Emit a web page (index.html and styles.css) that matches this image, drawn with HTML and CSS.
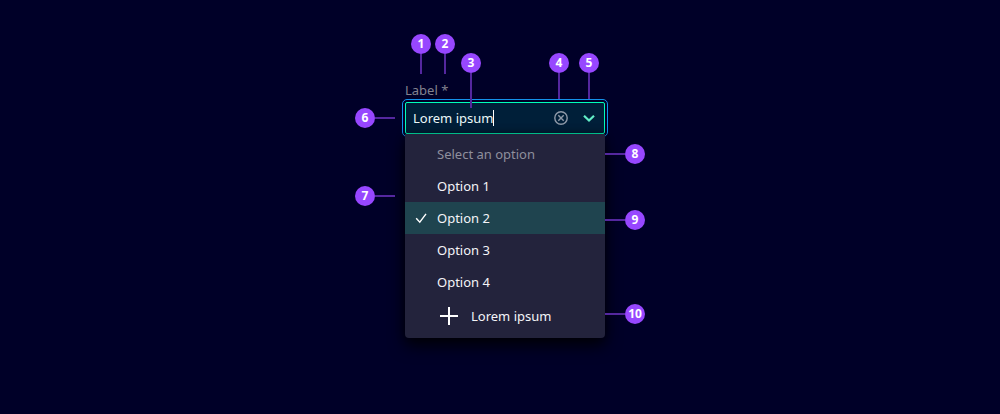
FILE: index.html
```html
<!DOCTYPE html>
<html lang="en">
<head>
<meta charset="utf-8">
<meta name="viewport" content="width=device-width, initial-scale=1">
<title>Select anatomy</title>
<link rel="stylesheet" href="styles.css">
</head>
<body>
<main class="figure">
  <div class="select">
    <label class="label" for="combo">Label *</label>
    <div class="field">
      <div class="value"><input class="input" id="combo" type="text" size="9" value="Lorem ipsum" required></div>
      <button class="icon-button" type="button" aria-label="Clear">
        <svg width="14" height="14" viewBox="0 0 14 14" fill="none" stroke="#8f9aa9" stroke-width="1.4"><circle cx="7" cy="7" r="6.2"/><path d="M4.3 4.3l5.4 5.4M9.7 4.3L4.3 9.7"/></svg>
      </button>
      <button class="icon-button" type="button" aria-label="Toggle options">
        <svg width="14" height="14" viewBox="0 0 14 14" fill="none" stroke="#62eec7" stroke-width="2.2"><path d="M2 4.8l5 4.8 5-4.8"/></svg>
      </button>
    </div>
    <div class="menu">
      <button class="option placeholder" type="button">Select an option</button>
      <button class="option" type="button">Option 1</button>
      <button class="option selected" type="button">
        <svg class="check" width="12" height="12" viewBox="0 0 12 12" fill="none" stroke="#fff" stroke-width="1.4"><path d="M1.2 6.2l3.6 4L11 1.8"/></svg>
        Option 2</button>
      <button class="option" type="button">Option 3</button>
      <button class="option" type="button">Option 4</button>
      <button class="option create" type="button">
        <svg width="18" height="18" viewBox="0 0 18 18" fill="none" stroke="#fff" stroke-width="2"><path d="M9 0v18M0 9h18"/></svg>
        Lorem ipsum</button>
    </div>
  </div>
  <span class="pin down pin-1">1</span>
  <span class="pin down pin-2">2</span>
  <span class="pin down long pin-3">3</span>
  <span class="pin down medium pin-4">4</span>
  <span class="pin down medium pin-5">5</span>
  <span class="pin right pin-6">6</span>
  <span class="pin right pin-7">7</span>
  <span class="pin left pin-8">8</span>
  <span class="pin left pin-9">9</span>
  <span class="pin left pin-10">10</span>
</main>
</body>
</html>
```
FILE: styles.css
```css
* {
  box-sizing: border-box;
}

body {
  margin: 0;
  min-height: 100vh;
  padding-top: 34px;
  background: #000028;
  color: #f4f4f8;
  font: 13px/20px "Noto Sans", "Open Sans", sans-serif;
}

button,
input {
  margin: 0;
  padding: 0;
  border: 0;
  background: none;
  color: inherit;
  font: inherit;
}

svg {
  display: block;
}

.figure {
  position: relative;
  max-width: 290px;
  margin: 0 auto;
  padding: 46px 40px 0 50px;
}

.select {
  display: flex;
  flex-direction: column;
}

.label {
  padding-bottom: 2px;
  color: #83838f;
}

.field {
  display: flex;
  align-items: center;
  height: 32px;
  padding: 0 7px;
  border: 1px solid #00ffb9;
  border-radius: 2px;
  outline: 1px solid #1491eb;
  outline-offset: 2px;
  background: #001f39;
}

.value {
  flex: 1;
  min-width: 0;
}

.input {
  display: block;
  height: 16px;
  field-sizing: content;
  border-right: 1px solid #fff;
  outline: 0;
  color: #ebf7f8;
}

.icon-button {
  margin-left: 14px;
}

.icon-button:last-child {
  margin-right: 1px;
}

.menu {
  position: relative;
  display: flex;
  flex-direction: column;
  padding: 4px 0;
  border-radius: 0 0 4px 4px;
  background: #23233c;
  box-shadow: 0 8px 16px rgba(0, 0, 0, 0.8), 0 0 8px rgba(0, 0, 0, 0.4);
}

.option {
  position: relative;
  display: flex;
  align-items: center;
  height: 32px;
  padding: 0 32px;
  text-align: left;
}

.placeholder {
  color: #8f8f9c;
}

.selected {
  background: #1f444f;
}

.check {
  position: absolute;
  left: 10px;
}

.create {
  gap: 13px;
  height: 36px;
  padding-left: 35px;
}

.pin {
  position: absolute;
  width: 20px;
  height: 20px;
  border-radius: 50%;
  background: #9747ff;
  color: #fff;
  font-size: 12px;
  font-weight: 700;
  line-height: 20px;
  text-align: center;
}

.pin::after {
  content: "";
  position: absolute;
  background: #54279f;
}

.down::after {
  top: 20px;
  left: 9px;
  width: 2px;
  height: 20px;
}

.medium::after {
  height: 26px;
}

.long::after {
  height: 35px;
}

.left::after,
.right::after {
  top: 9px;
  width: 20px;
  height: 2px;
}

.right::after {
  left: 20px;
}

.left::after {
  right: 20px;
}

.pin-1 { left: 56px; top: 0; }
.pin-2 { left: 80px; top: 0; }
.pin-3 { left: 106px; top: 19px; }
.pin-4 { left: 194px; top: 19px; }
.pin-5 { left: 224px; top: 19px; }
.pin-6 { left: 0; top: 74px; }
.pin-7 { left: 0; top: 152px; }
.pin-8 { right: 0; top: 110px; }
.pin-9 { right: 0; top: 176px; }
.pin-10 { right: 0; top: 270px; }
```
